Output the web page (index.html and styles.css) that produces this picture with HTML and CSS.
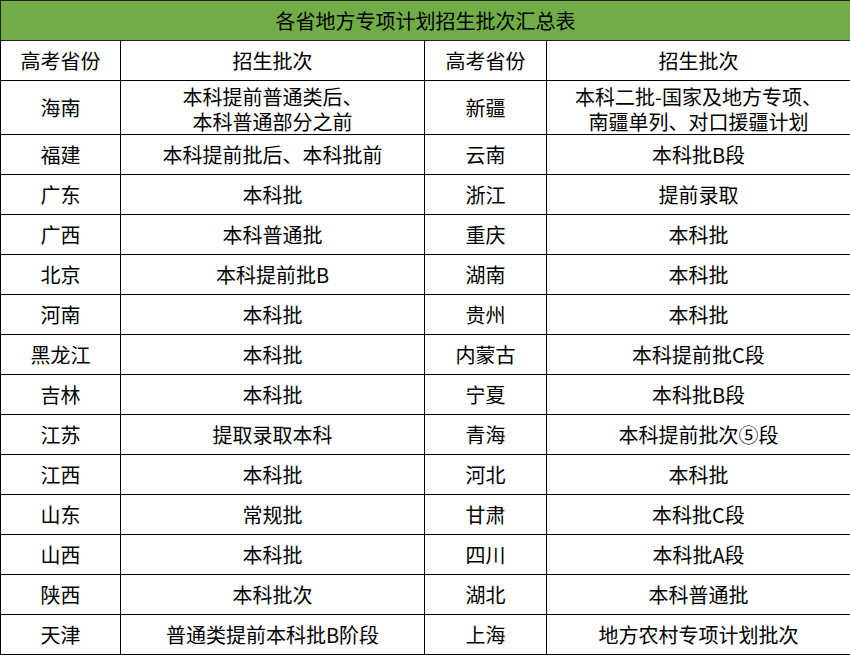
FILE: index.html
```html
<!DOCTYPE html>
<html lang="zh-CN">
<head>
<meta charset="utf-8">
<title>各省地方专项计划招生批次汇总表</title>
<link rel="stylesheet" href="styles.css">
</head>
<body>
<table class="summary">
  <colgroup>
    <col class="c-prov">
    <col class="c-batch">
    <col class="c-prov2">
    <col class="c-batch2">
  </colgroup>
  <thead>
    <tr class="title-row"><th colspan="4">各省地方专项计划招生批次汇总表</th></tr>
    <tr class="head-row"><th>高考省份</th><th>招生批次</th><th>高考省份</th><th>招生批次</th></tr>
  </thead>
  <tbody>
    <tr class="tall"><td>海南</td><td class="two"><span class="ln">本科提前普通类后、</span><span class="ln">本科普通部分之前</span></td><td>新疆</td><td class="two"><span class="ln">本科二批-国家及地方专项、</span><span class="ln">南疆单列、对口援疆计划</span></td></tr>
    <tr><td>福建</td><td>本科提前批后、本科批前</td><td>云南</td><td>本科批B段</td></tr>
    <tr><td>广东</td><td>本科批</td><td>浙江</td><td>提前录取</td></tr>
    <tr><td>广西</td><td>本科普通批</td><td>重庆</td><td>本科批</td></tr>
    <tr><td>北京</td><td>本科提前批B</td><td>湖南</td><td>本科批</td></tr>
    <tr><td>河南</td><td>本科批</td><td>贵州</td><td>本科批</td></tr>
    <tr><td>黑龙江</td><td>本科批</td><td>内蒙古</td><td>本科提前批C段</td></tr>
    <tr><td>吉林</td><td>本科批</td><td>宁夏</td><td>本科批B段</td></tr>
    <tr><td>江苏</td><td>提取录取本科</td><td>青海</td><td>本科提前批次⑤段</td></tr>
    <tr><td>江西</td><td>本科批</td><td>河北</td><td>本科批</td></tr>
    <tr><td>山东</td><td>常规批</td><td>甘肃</td><td>本科批C段</td></tr>
    <tr><td>山西</td><td>本科批</td><td>四川</td><td>本科批A段</td></tr>
    <tr><td>陕西</td><td>本科批次</td><td>湖北</td><td>本科普通批</td></tr>
    <tr><td>天津</td><td>普通类提前本科批B阶段</td><td>上海</td><td>地方农村专项计划批次</td></tr>
  </tbody>
</table>
</body>
</html>
```
FILE: styles.css
```css
html, body {
  margin: 0;
  padding: 0;
  background: #ffffff;
}
body {
  font-family: "Noto Sans CJK SC", "Noto Sans", sans-serif;
  color: #000;
}
.summary {
  border-collapse: collapse;
  table-layout: fixed;
  width: 850px;
  font-size: 20px;
}
.c-prov { width: 120px; }
.c-batch { width: 304px; }
.c-prov2 { width: 122px; }
.c-batch2 { width: 304px; }
.summary th,
.summary td {
  border: 1px solid #000;
  text-align: center;
  vertical-align: middle;
  padding: 0;
  font-weight: normal;
  height: 39px;
  line-height: 25px;
  white-space: nowrap;
}
.title-row th {
  background: #70ad47;
  border-color: #222;
}
.summary tr.tall td {
  height: 53px;
}
.summary tr.tall td.two {
  padding-top: 3px;
  height: 50px;
}
.ln {
  display: block;
  height: 25px;
  line-height: 25px;
}
```
